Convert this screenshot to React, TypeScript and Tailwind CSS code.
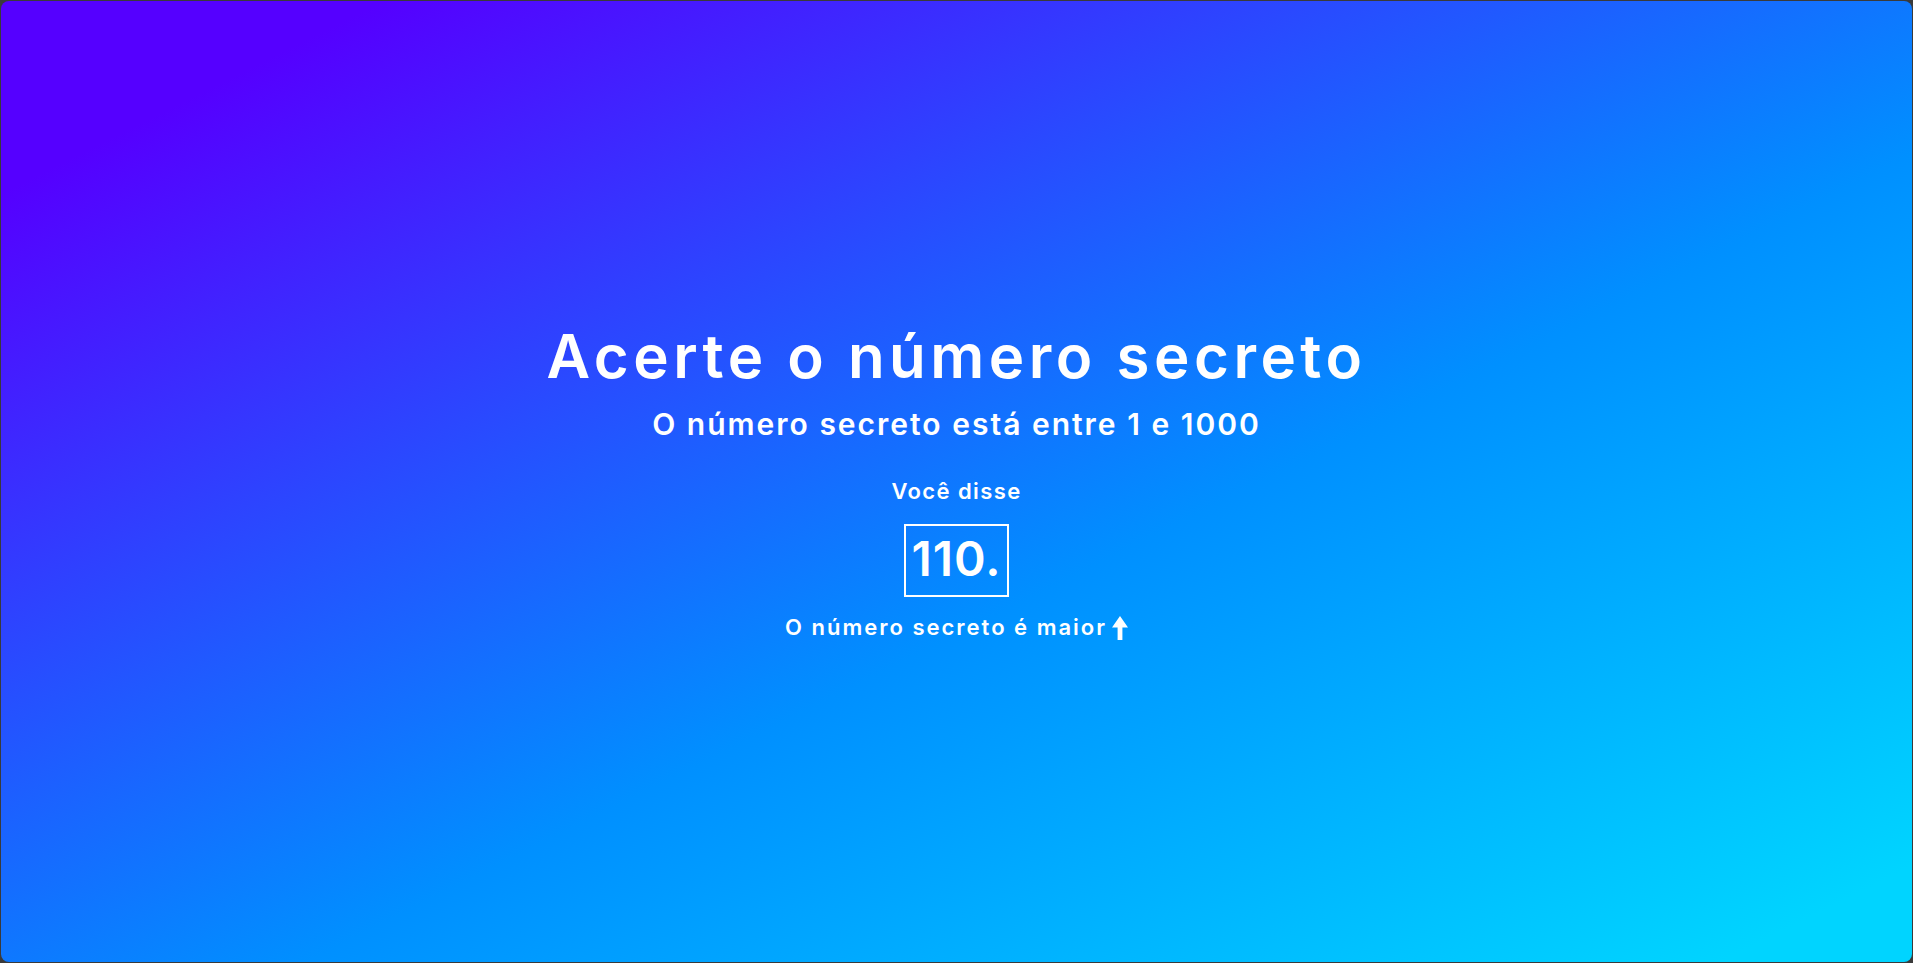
import React from "react";

const ArrowUp: React.FC = () => (
  <svg width="16" height="24" viewBox="0 0 16 24" className="ml-[5px] mb-[-2px]" fill="white">
    <path d="M8 0 L16 11.5 L10.4 11.5 L10.4 24 L5.6 24 L5.6 11.5 L0 11.5 Z" />
  </svg>
);

const App: React.FC = () => {
  const guess = "110.";

  return (
    <div className="w-[1913px] h-[963px] bg-[#3a3a3a] p-[1px]">
      <div
        className="h-full w-full pt-[1px] rounded-[8px] bg-[linear-gradient(to_bottom_right,#5500ff_10%,#0090ff_58%,#00d4ff_95%)] flex flex-col items-center justify-center text-white text-center"
        style={{ fontFamily: "Inter, 'Noto Sans', sans-serif" }}
      >
        <h1 className="text-[60px] leading-none font-semibold tracking-[4.5px]">Acerte o número secreto</h1>
        <h3 className="mt-[23px] text-[30px] leading-none font-semibold tracking-[2px]">
          O número secreto está entre 1 e 1000
        </h3>

        <div className="mt-[41px] text-[22px] leading-none font-semibold tracking-[1.4px]">Você disse</div>
        <div className="mt-[22px] border-2 border-white px-[5px] pt-[9px] pb-[12px] text-[48px] leading-none font-semibold tracking-[1px]">
          {guess}
        </div>
        <div className="mt-[19px] flex items-end text-[22px] leading-none font-semibold tracking-[2px]">
          <span>O número secreto é maior</span>
          <ArrowUp />
        </div>
      </div>
    </div>
  );
};

export default App;
